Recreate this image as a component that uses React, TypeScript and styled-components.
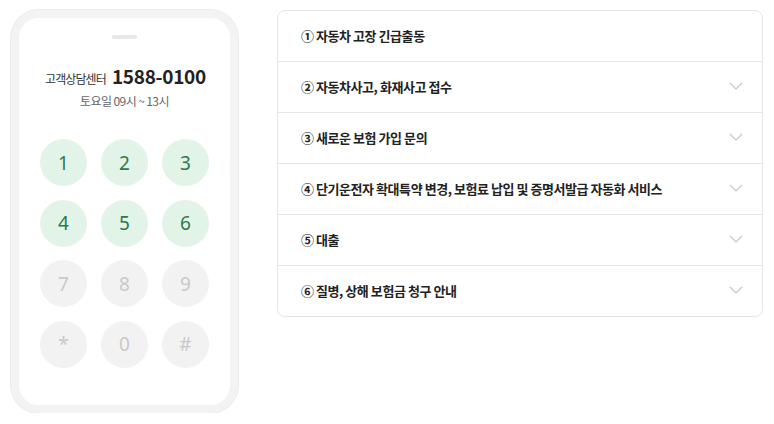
import React from "react";
import styled, { createGlobalStyle } from "styled-components";

const GlobalStyle = createGlobalStyle`
  html, body {
    margin: 0;
    padding: 0;
    background: #ffffff;
    font-family: "Noto Sans CJK KR", "Noto Sans", sans-serif;
    color: #222222;
  }
`;

const Page = styled.div`
  display: flex;
  align-items: flex-start;
  gap: 39px;
  padding: 10px 0 0 11px;
`;

const Phone = styled.div`
  box-sizing: border-box;
  width: 227px;
  height: 403px;
  border: 8px solid #f3f3f3;
  border-radius: 28px;
  box-shadow: 0 0 0 1px #ebebeb;
  background: #ffffff;
  display: flex;
  flex-direction: column;
  align-items: center;
`;

const Notch = styled.div`
  width: 25px;
  height: 4px;
  border-radius: 2px;
  background: #e8e8e8;
  margin-top: 17px;
`;

const Title = styled.div`
  margin-top: 24px;
  line-height: 26px;
  display: flex;
  align-items: baseline;
  gap: 6px;
  white-space: nowrap;
  padding-left: 2px;
`;

const TitleLabel = styled.span`
  font-size: 12px;
  letter-spacing: -0.9px;
  color: #333333;
`;

const TitleNumber = styled.span`
  font-size: 19px;
  font-weight: 700;
  letter-spacing: -0.3px;
  color: #222222;
`;

const Hours = styled.div`
  font-size: 12px;
  line-height: 18px;
  letter-spacing: -0.6px;
  color: #666666;
`;

const Keypad = styled.div`
  margin-top: 29px;
  display: grid;
  grid-template-columns: repeat(3, 47px);
  column-gap: 14px;
  row-gap: 13.5px;
`;

const Key = styled.div<{ $active: boolean }>`
  width: 47px;
  height: 47px;
  border-radius: 50%;
  display: flex;
  align-items: center;
  justify-content: center;
  font-family: "Noto Sans", "Noto Sans CJK KR", sans-serif;
  font-size: 19px;
  background: ${(p) => (p.$active ? "#e2f4e7" : "#f2f2f2")};
  color: ${(p) => (p.$active ? "#2c7a4b" : "#c9c9c9")};
`;

const Card = styled.div`
  box-sizing: border-box;
  width: 486px;
  border: 1px solid #e4e4e4;
  border-radius: 8px;
  background: #ffffff;
  overflow: hidden;
`;

const Row = styled.div`
  box-sizing: border-box;
  height: 51px;
  display: flex;
  align-items: center;
  justify-content: space-between;
  padding: 0 19px 2px 23px;
  border-top: 1px solid #e6e6e6;

  &:first-child {
    border-top: none;
    height: 50px;
  }
`;

const RowText = styled.span`
  font-size: 13px;
  font-weight: 700;
  letter-spacing: -0.45px;
  color: #222222;
`;

const Chevron = () => (
  <svg width="14" height="8" viewBox="0 0 14 8" fill="none">
    <path d="M1 1l6 6 6-6" stroke="#c6c6c6" strokeWidth="1.2" />
  </svg>
);

const keys = ["1", "2", "3", "4", "5", "6", "7", "8", "9", "*", "0", "#"];

const items = [
  "① 자동차 고장 긴급출동",
  "② 자동차사고, 화재사고 접수",
  "③ 새로운 보험 가입 문의",
  "④ 단기운전자 확대특약 변경, 보험료 납입 및 증명서발급 자동화 서비스",
  "⑤ 대출",
  "⑥ 질병, 상해 보험금 청구 안내",
];

export default function App() {
  return (
    <>
      <GlobalStyle />
      <Page>
        <Phone>
          <Notch />
          <Title>
            <TitleLabel>고객상담센터</TitleLabel>
            <TitleNumber>1588-0100</TitleNumber>
          </Title>
          <Hours>토요일 09시 ~ 13시</Hours>
          <Keypad>
            {keys.map((k, i) => (
              <Key key={k} $active={i < 6}>
                {k}
              </Key>
            ))}
          </Keypad>
        </Phone>
        <Card>
          {items.map((t, i) => (
            <Row key={t}>
              <RowText>{t}</RowText>
              {i > 0 && <Chevron />}
            </Row>
          ))}
        </Card>
      </Page>
    </>
  );
}
